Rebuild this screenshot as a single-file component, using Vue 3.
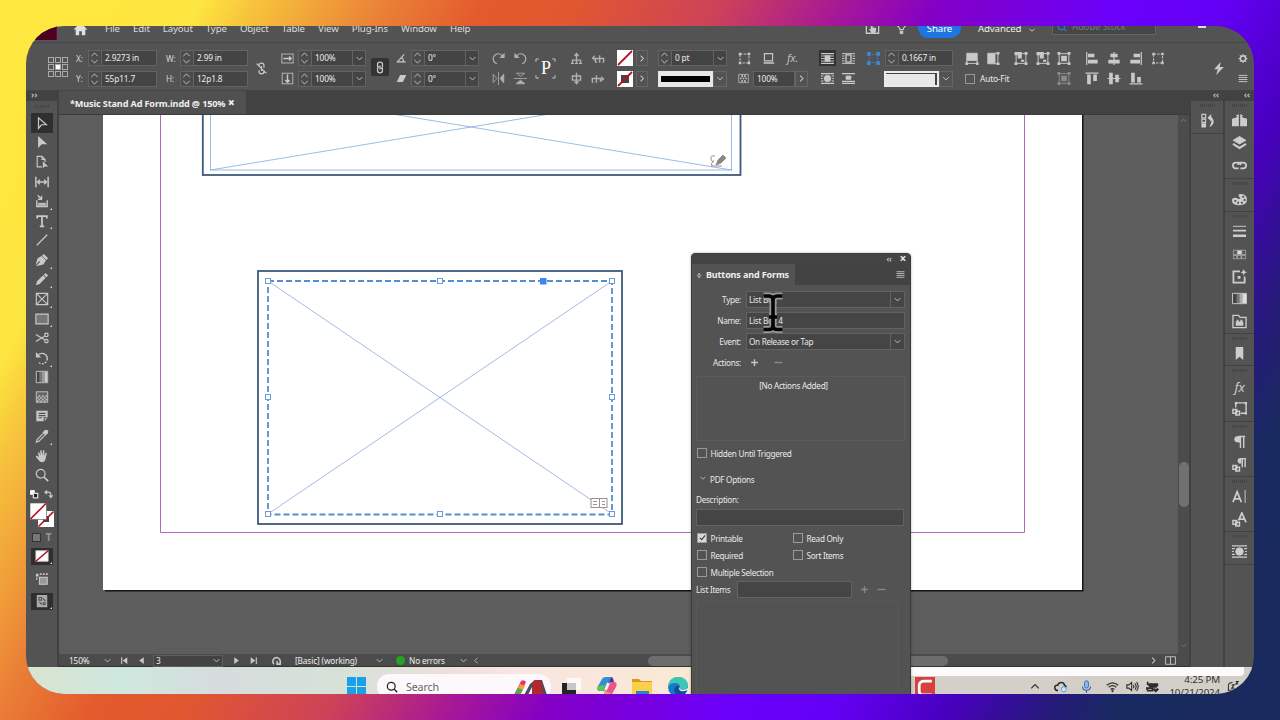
<script setup>
import { ref } from 'vue'

const menus = ['File', 'Edit', 'Layout', 'Type', 'Object', 'Table', 'View', 'Plug-Ins', 'Window', 'Help']

// every icon lives on a 16x16 grid
const icons = {
  home: '<path fill="currentColor" stroke="none" d="M8 1 0 8.500h2.500V15h4v-4.500h3V15h4V8.500H16z"/>',
  touch: '<path stroke-width="1.500" d="M4 3H1v11h14V3h-2"/><path fill="currentColor" stroke="none" d="M6 1h2v6l4 1v4l-2 2H7L4 9h2z"/>',
  bulb: '<path stroke-width="1.500" d="M2 2c0 4 4 5 4 8h4c0-3 4-4 4-8M6 13h4"/><path fill="currentColor" d="M6.500 12h3v3h-3z"/>',
  down: '<path stroke-width="1.600" d="m3 5.500 5 5 5-5"/>',
  right: '<path stroke-width="1.800" d="m5.500 3 5 5-5 5"/>',
  left: '<path stroke-width="1.400" d="m10 3-5 5 5 5"/>',
  up: '<path stroke-width="1.800" d="m2 11 6-6 6 6"/>',
  unlink: '<path stroke-width="1.500" d="M5 6V4q0-2.500 3-2.500T11 4v3M5 10v2q0 2.500 3 2.500t3-2.500v-1.500M8 5v6M2 2l12 12"/>',
  chain: '<path stroke-width="1.600" d="M5 7V4q0-2.500 3-2.500T11 4v3q0 2-2 2M11 9v3q0 2.500-3 2.500T5 12V9q0-2 2-2M8 5.500v5"/>',
  scaleX: '<path d="M1 2v12M15 2v12M1 2.500h14M1 13.500h14" /><path stroke-width="1.800" d="M3 8h9M10 5.500 12.500 8 10 10.500"/>',
  scaleY: '<path d="M1.500 1.500h13M1.500 14.500h13M1.500 1v14M14.500 1v14"/><path stroke-width="1.800" d="M8 3v9M5.500 10 8 12.500 10.500 10"/>',
  angle: '<path stroke-width="1.700" d="M12 2 2 13h12M8 6.500q3 2 3 6.500"/>',
  shear: '<path fill="currentColor" stroke="none" d="M6 3h9l-5 10H1z"/>',
  rotCw: '<path stroke-width="1.500" d="M6 14.500A6.300 6.300 0 1 1 13 5"/><path fill="currentColor" stroke="none" d="M15.500 1v6.500H9z"/>',
  rotCcw: '<path stroke-width="1.500" d="M10 14.500A6.300 6.300 0 1 0 3 5"/><path fill="currentColor" stroke="none" d="M.5 1v6.500H7z"/>',
  flipH: '<path d="M8 0v16M1.500 3v10L6 8z"/><path fill="currentColor" d="M14.500 2.500v11L10 8z"/>',
  flipV: '<path d="M0 8h16M3 1.500h10L8 5.500z"/><path fill="currentColor" d="M2.500 14.500h11L8 10z"/>',
  selUp: '<path stroke-width="1.700" d="M8 2v12M3 14v-4h10v4M5.500 5 8 2l2.500 3M1 14h4M11 14h4M6 14h4"/>',
  selPrev: '<path stroke-width="1.700" d="M5 12V8h10v4M10 4v8M4 12.500h3M9 12.500h2M13.500 12.500h2"/><path fill="currentColor" stroke="none" d="M4 4v7L0 7.500z"/>',
  selDown: '<path stroke-width="1.700" d="M8 1v12M3 8V5h10v3M3 8v2h10V8M5.500 11.500 8 14.500l2.500-3"/>',
  selNext: '<path stroke-width="1.700" d="M1 12V8h10v4M6 4v8M.5 12.500h2M5 12.500h2"/><path fill="currentColor" stroke="none" d="M12 5v7l4-3.500z"/>',
  frame: '<path stroke-width="1.300" stroke-dasharray="2 1.500" d="M3 3h10v10H3z"/><path fill="currentColor" stroke="none" d="M0 0h4.500v4.500H0zM11.500 0H16v4.500h-4.500zM0 11.500h4.500V16H0zM11.500 11.500H16V16h-4.500z"/>',
  dashBox: '<path stroke-width="1.200" stroke-dasharray="3 1.500" d="M2.500 2.500h11v11h-11z"/><path fill="currentColor" stroke="none" d="M1 1h3v3H1zM12 1h3v3h-3zM1 12h3v3H1zM12 12h3v3h-3z"/>',
  shadow: '<path stroke-width="1.400" d="M3 2h10v9H3z"/><path stroke-width="2" d="M2 13.500h13"/>',
  checker: '<path d="M1 2h14v12H1z"/><path fill="currentColor" stroke="none" d="M5 3h2v3H5zM9 3h2v3H9zM3 7h2v2H3zM7 7h2v2H7zM11 7h2v2h-2zM5 10h2v3H5zM9 10h2v3H9z"/>',
  wrapNone: '<path stroke-width="1.300" d="M0 2h16M0 5h16M0 8h16M0 11h16M0 14h16"/><path fill="currentColor" stroke="none" d="M4.500 4h7v8h-7z"/>',
  wrapBox: '<path stroke-width="1.200" d="M0 2h16M0 5h3M13 5h3M0 8h3M13 8h3M0 11h3M13 11h3M0 14h16"/><path stroke-width="1.700" d="M5 3.500h6v9H5z"/>',
  wrapShape: '<path stroke-width="1.300" d="M0 2h16M0 5h3M13 5h3M0 8h2M14 8h2M0 11h3M13 11h3M0 14h16"/><circle cx="8" cy="8" r="4" fill="currentColor"/>',
  wrapJump: '<path stroke-width="1.500" d="M0 2h16M0 14h16M0 11.500h16"/><path fill="currentColor" d="M5 5h6v4H5z"/>',
  fitA: '<path fill="currentColor" d="M1.500 1.500h13v9h-13z"/><path stroke-width="1.200" d="M1.500 10v4h13v-4"/><path fill="currentColor" stroke="none" d="M0 12.500h3V16H0zM13 12.500h3V16h-3z"/>',
  fitB: '<path fill="currentColor" d="M1.500 1.500h9v13h-9z"/><path stroke-width="1.200" d="M10 1.500h4v13h-4"/><path fill="currentColor" stroke="none" d="M12.500 0H16v3h-3.500zM12.500 13H16v3h-3.500z"/>',
  fitC: '<path stroke-width="1.200" d="M2 2h12v12H2z"/><path fill="currentColor" stroke="none" d="M0 0h9v8H4V4H0zM12.500 0H16v3.500h-3.500zM0 12.500h3.500V16H0zM12.500 12.500H16V16h-3.500zM8 9.500h4v2.500H8z"/>',
  fitD: '<path stroke-width="1.200" d="M2 2h12v12H2z"/><path fill="currentColor" stroke="none" d="M4.500 4.500h7v7h-7zM0 0h3.500v3.500H0zM12.500 0H16v3.500h-3.500zM0 12.500h3.500V16H0zM12.500 12.500H16V16h-3.500z"/>',
  alL: '<path stroke-width="1.500" d="M1.500 0v16"/><path fill="currentColor" stroke="none" d="M3 2h8v4.500H3zM3 9.500h12V14H3z"/>',
  alC: '<path stroke-width="1.500" d="M8 0v16"/><path fill="currentColor" stroke="none" d="M3.500 2h9v4.500h-9zM1 9.500h14V14H1z"/>',
  alR: '<path stroke-width="1.500" d="M14.500 0v16"/><path fill="currentColor" stroke="none" d="M5 2h8v4.500H5zM1 9.500h12V14H1z"/>',
  alT: '<path stroke-width="1.500" d="M0 1.500h16"/><path fill="currentColor" stroke="none" d="M2 3h4.500v12H2zM9.500 3H14v8H9.500z"/>',
  alM: '<path stroke-width="1.500" d="M0 8h16"/><path fill="currentColor" stroke="none" d="M2 1h4.500v14H2zM9.500 3.500H14v9H9.500z"/>',
  alB: '<path stroke-width="1.500" d="M0 14.500h16"/><path fill="currentColor" stroke="none" d="M2 1h4.500v12H2zM9.500 6H14v7H9.500z"/>',
  bolt: '<path fill="currentColor" stroke="none" d="M10 0 2 9h4.500L4.500 16 14 6H9z"/>',
  gear: '<circle cx="8" cy="8" r="4.300" stroke-width="2.600"/><path stroke-width="2" d="M8 1v2M8 13v2M1 8h2M13 8h2M3 3l1.500 1.500M11.500 11.500 13 13M13 3l-1.500 1.500M4.500 11.500 3 13"/>',
  menu: '<path stroke-width="1.500" d="M1 3h14M1 6.300h14M1 9.600h14M1 13h14"/>',
  select: '<path stroke-width="1.400" d="M4 2v12l3.500-4H13z"/>',
  direct: '<path fill="currentColor" stroke="none" d="M3.500 1v14l4-4.500H14z"/>',
  page: '<path stroke-width="1.300" d="M8 13.500H2.500V1.500H8L11.500 5v3M8 1.500V5h3.500"/><path fill="currentColor" stroke="none" d="M9 7v8l2-2h4z"/>',
  gap: '<path stroke-width="1.700" d="M1 2v12M15 2v12M3 8h10M5.500 5.500 3 8l2.500 2.500M10.500 5.500 13 8l-2.500 2.500"/>',
  collect: '<path stroke-width="1.500" d="M2 7v7.500h12V7M4.500 11.500h7M3 1.500l4 4M7.500 2v4h-4"/><path fill="currentColor" stroke="none" d="M3 10h10v4H3z" opacity=".7"/>',
  type: '<path stroke-width="2" d="M2.500 5V2.500h11V5M8 2.500v11M5.500 14h5"/>',
  line: '<path stroke-width="1.400" d="M2 14 14 2"/>',
  pen: '<path fill="currentColor" stroke="none" d="m10 1 5 5-2 2-5-5zM7.500 3.500l5 5-3 4.500L1 15l5-5-1-1-4.500 5L3 6z"/>',
  pencil: '<path fill="currentColor" stroke="none" d="m12 1 3 3-2 2-3-3zM9.300 3.700l3 3-7 7L1 15l1.300-4.300z"/>',
  rectFrame: '<path stroke-width="1.300" d="M1.500 1.500h13v13h-13zM1.500 1.500l13 13M14.500 1.500l-13 13"/>',
  rect: '<path stroke-width="1.300" fill="#777" d="M1 2.500h14v11H1z"/>',
  scissors: '<path stroke-width="1.500" d="M1 4l10 6M1 12l10-6"/><circle cx="13" cy="4.500" r="2" stroke-width="1.400"/><circle cx="13" cy="11.500" r="2" stroke-width="1.400"/>',
  rotate: '<path stroke-width="1.600" d="M3 5.500A6 6 0 0 1 14 9" /><path stroke-width="1.600" stroke-dasharray="2 1.500" d="M14 9A6 6 0 0 1 4 13"/><path fill="currentColor" stroke="none" d="M1 1v6.500h6z"/>',
  gradient: '<path fill="#444" stroke="none" d="M2 2h3v12H2z"/><path fill="#777" stroke="none" d="M5 2h3v12H5z"/><path fill="#999" stroke="none" d="M8 2h3v12H8z"/><path fill="#ccc" stroke="none" d="M11 2h3v12h-3z"/><path d="M1.500 1.500h13v13h-13z"/>',
  feather: '<path d="M1.500 2h13v12h-13z" fill="#666"/><path fill="#bbb" stroke="none" d="M2 8h2v2H2zM6 8h2v2H6zM10 8h2v2h-2zM4 10h2v2H4zM8 10h2v2H8zM12 10h2v2h-2zM2 12h2v2H2zM6 12h2v2H6zM10 12h2v2h-2zM4 6h2v2H4zM8 6h2v2H8zM12 6h2v2h-2z"/>',
  note: '<path fill="currentColor" stroke="none" d="M1.500 2h13v8l-4 4h-9z"/><path stroke="#535353" stroke-width="1.300" d="M4 5h8M4 7.500h8M4 10h4M10.500 14v-4h4"/>',
  dropper: '<path stroke-width="1.300" d="m9.500 5-7 7-1 3 3-1 7-7"/><path fill="currentColor" stroke="none" d="M11 1.500q2-1.500 3.500 0t0 3.500L12 7.500 8.500 4z"/>',
  hand: '<path fill="currentColor" stroke="none" d="M4.500 9 3.300 4l1.500-.4L6.200 7.500 6 1.500h1.600l.6 6 1-6h1.500l-.3 6.300L12.300 4l1.300.5-1.400 6Q11.500 15 8 15q-2.500 0-4-2.500L.8 8.500 2 7.500z"/>',
  zoom: '<circle cx="6.500" cy="6.500" r="5" stroke-width="1.400"/><path stroke-width="2" d="m10 10 5 5"/>',
  swap: '<path stroke-width="1.800" d="M4 5h3q4 0 4 5"/><path fill="currentColor" stroke="none" d="M5 1v8L0 5zM7 10h8l-4 5z"/>',
  pages: '<path fill="currentColor" stroke="none" d="M7.300 2v12H0V6l4-1zM8.700 2v12H16V6l-4-1zM4 3l3-2v3zM12 3 9 1v3z"/>',
  layers: '<path fill="currentColor" stroke="none" d="m8 1 7.500 4.500L8 10 .5 5.500z"/><path stroke-width="2.200" d="m1 9.500 7 4.300 7-4.300"/>',
  links: '<path stroke-width="1.900" d="M7 11H4Q1 11 1 8t3-3h3q2 0 2.500 2.500M9 11h3q3 0 3-3t-3-3H9Q7 5 6.500 7.500"/>',
  palette: '<path fill="currentColor" stroke="none" fill-rule="evenodd" d="M9 2q7 0 7 6t-8 6-8-5q0-3 3-3 2 0 3 1t3-.5L7.500 5Q6 2 9 2zM11 4h2v2h-2zM12.500 7.500h2v2h-2zM9.500 10.500h2v2h-2zM5.500 10.500h2v2h-2zM2.500 8.500h2v2h-2z"/>',
  stroke: '<path d="M1 2.500h14"/><path stroke-width="1.800" d="M1 7h14"/><path stroke-width="2.800" d="M1 12.500h14"/>',
  swatches: '<path fill="#999" stroke="none" d="M1 3h14v10H1z"/><path fill="#555" stroke="none" d="M2 4h3v3.500H2zM11 4h3v3.500h-3zM2 9.500h2.500V12H2zM6.500 9.500H9V12H6.500zM11 9.500h3V12h-3z"/><path fill="#ddd" stroke="none" d="M6 4h4v3.500H6z"/>',
  newBox: '<path stroke-width="1.900" d="M8.500 2.500h-7v12h12V8"/><path fill="currentColor" stroke="none" d="m12.500 0 1 2.500L16 3.500l-2.500 1-1 2.500-1-2.500L9 3.500l2.500-1zM6 7.500h3v3H6z"/>',
  gradPanel: '<path fill="#444" stroke="none" d="M1 3h4v10H1z"/><path fill="#777" stroke="none" d="M5 3h3v10H5z"/><path fill="#aaa" stroke="none" d="M8 3h3v10H8z"/><path fill="#ddd" stroke="none" d="M11 3h4v10h-4z"/><path d="M.5 2.500h15v11H.5z"/>',
  library: '<path stroke-width="1.400" d="M1 14.500V1.500h6l1.500 2H15v11z"/><path fill="currentColor" stroke="none" d="M4 8h1V6h2v2h2V6h2v2h1v4.500H4z"/>',
  bookmark: '<path fill="currentColor" stroke="none" d="M4 1h8v14l-4-3.500L4 15z"/>',
  objStyle: '<path stroke-width="1.500" d="M4 7V2h11v11H9"/><path fill="currentColor" stroke="none" d="M3 1h2.500v2.500H3zM13.500 1H16v2.500h-2.500zM13.500 12H16v2.500h-2.500z"/><path stroke-width="1.500" d="M1 9h4v4H1zM4 11h4v4H4z"/>',
  para: '<path fill="currentColor" stroke="none" d="M9 2v7H7Q2.500 9 2.500 5.500T7 2z"/><path stroke-width="1.500" d="M9 2v13M12.500 2v13M7 2.700h7"/>',
  paraStyle: '<path fill="currentColor" stroke="none" d="M10 1v6H9Q6 7 6 4t3-3z"/><path stroke-width="1.500" d="M11 1v10M14 1v10M9 1.700h6M1 9h4v4H1zM4 11h4v4H4z"/>',
  char: '<path stroke-width="1.800" d="m1 14 4.500-11L10 14M3 10.500h5"/><path d="M14 1v14"/>',
  charStyle: '<path stroke-width="1.800" d="m7 9 3.500-8L15 11M8 7.500h5"/><path stroke-width="1.500" d="M1 9h4v4H1zM4 11h4v4H4z"/>',
  convert: '<path fill="currentColor" stroke="none" d="M1 2h3v3H1zM5.500 1.500h2v2h-2zM9 1.500h2v2H9zM12.500 1.500h2v2h-2z"/><path stroke-width="1.200" d="M5 6h9v8H5zM2 6v3" fill="#999"/>',
  preview: '<path fill="#aaa" stroke="none" d="M2 1h12v14H2z"/><path stroke="#555" stroke-width="1.300" d="M4.500 4h3v3h-3zM9 5l3 3M5 9l3 3M9.500 10h2v2h-2z"/>',
  history: '<path stroke-width="1.200" d="M2 1.500h4v3.500H2zM2 6.500h4V10H2z"/><path fill="currentColor" stroke="none" d="M1.500 11H6.500v4.500h-5zM8 5l4-4v3q3 3 2.500 6T10 15q3-6 2-8v2z"/>',
  first: '<path stroke-width="2" d="M3 2v12"/><path fill="currentColor" stroke="none" d="M13 2v12L5 8z"/>',
  prev: '<path fill="currentColor" stroke="none" d="M12 2v12L4 8z"/>',
  next: '<path fill="currentColor" stroke="none" d="M4 2v12l8-6z"/>',
  last: '<path stroke-width="2" d="M13 2v12"/><path fill="currentColor" stroke="none" d="M3 2v12l8-6z"/>',
  preflight: '<path stroke-width="2.500" d="M4 13A6 6 0 1 1 14 8v5H9V8"/>',
  spread: '<path stroke-width="1.300" d="M.8 2.500h14.400v11H.8zM8 2.500v11"/>',
  plus: '<path stroke-width="2.400" d="M8 2v12M2 8h12"/>',
  minus: '<path stroke-width="2.400" d="M1 8h14"/>',
  search: '<circle cx="7" cy="7" r="5.200" stroke-width="1.700"/><path stroke-width="1.800" d="m11 11 4 4"/>',
  cloud: '<path stroke-width="1.900" d="M5 13Q1 13 1 9.500T4.500 6.500Q5.500 3 9 3t4 3.500Q15 7 15 9"/><circle cx="12" cy="11.500" r="3" stroke="#3b9be0" fill="#cfe9fb"/>',
  mic: '<rect x="5.500" y="1" width="5" height="9" rx="2.500" fill="#8fb8e8"/><path stroke-width="1.300" d="M3 8q0 4.500 5 4.500T13 8M8 12.500V16"/>',
  wifi: '<path stroke-width="1.500" d="M1 6.500q7-6 14 0M3.300 9q4.700-4 9.400 0M5.600 11.500q2.400-2 4.800 0"/><circle cx="8" cy="13.500" r="1" fill="currentColor"/>',
  speaker: '<path stroke-width="1.300" d="M1 6v4h2.500L7 13V3L3.500 6zM9 6q1.500 2 0 4M11 4q3 4 0 8M13 2.500q4 5.500 0 11"/>',
  battery: '<path stroke-width="2" d="M3 7q1-3 4-2h7v3M2 2v4M1 10h7v3H2z"/><path fill="currentColor" d="M4 6h9v3H4zM12 15l-3.500-3.500q1-2 3.500 0 2.500-2 3.500 0z"/>',
  bell: '<path stroke-width="1.300" d="M3 12V7q0-4 5-4M2 12.500h11M7 6h3l-3 4h3M12 2h3l-3 3h3"/>'
}

// top control strip: gap is the space before a column, rows run top to bottom
const controls = [
  { gap: 7, rows: [[{ label: 'X:', w: 12 }, { field: '2.9273 in', w: 69, step: true }], [{ label: 'Y:', w: 12 }, { field: '55p11.7', w: 69, step: true }]] },
  { gap: 9, rows: [[{ label: 'W:', w: 14 }, { field: '2.99 in', w: 68, step: true }], [{ label: 'H:', w: 14 }, { field: '12p1.8', w: 68, step: true }]] },
  { gap: 7, rows: [[{ icon: 'unlink', w: 13 }]] },
  { gap: 13, rows: [[{ icon: 'scaleX', w: 13 }, { field: '100%', w: 68, step: true, drop: true, pre: 4 }], [{ icon: 'scaleY', w: 13 }, { field: '100%', w: 68, step: true, drop: true, pre: 4 }]] },
  { gap: 5, on: true, rows: [[{ icon: 'chain', w: 18 }]] },
  { gap: 7, rows: [[{ icon: 'angle', w: 11 }, { field: '0°', w: 68, step: true, drop: true, pre: 4 }], [{ icon: 'shear', w: 11 }, { field: '0°', w: 68, step: true, drop: true, pre: 4 }]] },
  { gap: 12, dim: true, rows: [[{ icon: 'rotCw', w: 15 }, { icon: 'rotCcw', w: 15, pre: 7 }], [{ icon: 'flipH', w: 15 }, { icon: 'flipV', w: 15, pre: 7 }]] },
  { gap: 7, rows: [[{ mark: true, w: 22 }]] },
  { gap: 13, dim: true, rows: [[{ icon: 'selUp', w: 13 }, { icon: 'selPrev', w: 16, pre: 7 }], [{ icon: 'selDown', w: 13 }, { icon: 'selNext', w: 16, pre: 7 }]] },
  { gap: 11, rows: [[{ none: 'fill', w: 16 }, { icon: 'right', w: 12, box: true, pre: 3 }], [{ none: 'stroke', w: 16 }, { icon: 'right', w: 12, box: true, pre: 3 }]] },
  { gap: 10, rows: [[{ field: '0 pt', w: 69, step: true, drop: true }], [{ weight: true, w: 55 }, { icon: 'down', w: 14, box: true }]] },
  { gap: 11, rows: [[{ icon: 'dashBox', w: 13 }, { icon: 'shadow', w: 13, pre: 11 }, { fx: true, w: 14, pre: 12 }], [{ icon: 'checker', w: 11 }, { field: '100%', w: 42, pre: 4 }, { icon: 'right', w: 13, box: true }]] },
  { gap: 11, rows: [[{ icon: 'wrapNone', w: 17, dark: true }, { icon: 'wrapBox', w: 13, pre: 6 }], [{ icon: 'wrapShape', w: 17 }, { icon: 'wrapJump', w: 13, pre: 6 }]] },
  { gap: 12, rows: [[{ icon: 'frame', w: 13, blue: true }, { field: '0.1667 in', w: 68, step: true, pre: 5 }], [{ corner: true, w: 55, pre: 17 }, { icon: 'down', w: 14, box: true }]] },
  { gap: 12, rows: [[{ icon: 'fitA', w: 14 }, { icon: 'fitB', w: 14, pre: 7 }, { icon: 'fitC', w: 14, pre: 14 }, { icon: 'fitC', w: 14, pre: 8 }, { icon: 'fitD', w: 14, pre: 7 }], [{ check: 'Auto-Fit', w: 92 }, { icon: 'fitD', w: 14, dimmed: true }]] },
  { gap: 14, rows: [[{ icon: 'alL', w: 14 }, { icon: 'alC', w: 14, pre: 8 }, { icon: 'alR', w: 14, pre: 8 }, { icon: 'dashBox', w: 14, pre: 8 }], [{ icon: 'alT', w: 14 }, { icon: 'alM', w: 14, pre: 8 }, { icon: 'alB', w: 14, pre: 8 }]] },
  { gap: 47, rows: [[{ icon: 'bolt', w: 14 }]] },
  { gap: 12, rows: [[{ icon: 'gear', w: 10 }], [{ icon: 'menu', w: 10 }]] }
]

const tools = [
  { n: 'select' }, { n: 'direct' }, { n: 'page' }, { n: 'gap' }, { n: 'collect', more: true }, { n: 'type', more: true },
  { n: 'line' }, { n: 'pen', more: true }, { n: 'pencil', more: true }, { n: 'rectFrame', more: true }, { n: 'rect', more: true },
  { n: 'scissors' }, { n: 'rotate', more: true }, { n: 'gradient' }, { n: 'feather' }, { n: 'note' },
  { n: 'dropper', more: true }, { n: 'hand' }, { n: 'zoom' }
]
const activeTool = ref('select')

const docks = [
  ['pages', 'layers', 'links'],
  ['palette'],
  ['stroke', 'swatches', 'newBox', 'gradPanel', 'library'],
  ['bookmark'],
  ['fx', 'objStyle'],
  ['para', 'paraStyle'],
  ['char', 'charStyle'],
  ['wrapShape']
]

const handles = [
  [268, 281], [440, 281], [612, 281], [268, 397], [612, 397], [268, 514], [440, 514], [612, 514]
]

const form = ref({
  type: 'List Box',
  name: 'List Box 4',
  event: 'On Release or Tap',
  description: '',
  hidden: false,
  printable: true,
  readOnly: false,
  required: false,
  sortItems: false,
  multiple: false,
  item: ''
})
</script>

<template>
  <div class="backdrop">
    <div class="screen">
      <header class="menubar">
        <span class="logo"></span>
        <svg class="home" viewBox="0 0 16 16" v-html="icons.home"></svg>
        <nav class="menus">
          <span v-for="m in menus" :key="m">{{ m }}</span>
        </nav>
        <div class="menu-right">
          <svg class="touch" viewBox="0 0 16 16" v-html="icons.touch"></svg>
          <svg class="bulb" viewBox="0 0 16 16" v-html="icons.bulb"></svg>
          <span class="share">Share</span>
          <span class="workspace">Advanced</span>
          <svg class="ws-arrow" viewBox="0 0 16 16" v-html="icons.down"></svg>
          <span class="stock"><svg viewBox="0 0 16 16" v-html="icons.search"></svg>Adobe Stock</span>
          <span class="minimize"></span>
        </div>
      </header>

      <section class="controls">
        <div class="refpoint"><i v-for="n in 9" :key="n" :class="{ mid: n === 5 }"></i></div>
        <div
          v-for="(g, gi) in controls"
          :key="gi"
          class="group"
          :class="{ single: g.rows.length === 1, on: g.on, dim: g.dim }"
          :style="{ marginLeft: g.gap + 'px' }"
        >
          <div v-for="(row, ri) in g.rows" :key="ri" class="row">
            <div
              v-for="(c, ci) in row"
              :key="ci"
              class="cell"
              :class="{ box: c.box, dark: c.dark, blue: c.blue, faded: c.dimmed }"
              :style="{ width: c.w + 'px', marginLeft: (c.pre || 0) + 'px' }"
            >
              <svg v-if="c.icon" class="glyph" viewBox="0 0 16 16" v-html="icons[c.icon]"></svg>
              <span v-else-if="c.label" class="lbl">{{ c.label }}</span>
              <div v-else-if="c.field" class="field">
                <span v-if="c.step" class="step">
                  <svg viewBox="0 0 12 14"><path d="m2.500 5 3.500-3.500L9.500 5M2.500 9 6 12.500 9.500 9" /></svg>
                </span>
                <span class="val">{{ c.field }}</span>
                <span v-if="c.drop" class="drop"><svg viewBox="0 0 16 16" v-html="icons.down"></svg></span>
              </div>
              <svg v-else-if="c.none" class="none" viewBox="0 0 16 16">
                <rect width="16" height="16" fill="#fff" />
                <rect v-if="c.none === 'stroke'" x="4" y="4" width="8" height="8" fill="#444" />
                <path d="M1 15 15 1" stroke="#b5122a" stroke-width="1.800" />
              </svg>
              <span v-else-if="c.mark" class="mark"><svg viewBox="0 0 22 22"><path d="M1 4V1h3M18 1h3v3M1 18v3h3M18 21h3v-3" /></svg>P</span>
              <span v-else-if="c.fx" class="fx">fx.</span>
              <span v-else-if="c.weight" class="weight"></span>
              <span v-else-if="c.corner" class="corner"></span>
              <span v-else-if="c.check" class="autofit"><i></i>{{ c.check }}</span>
            </div>
          </div>
        </div>
      </section>

      <main class="work">
        <aside class="toolbar">
          <div class="dock-head">››</div>
          <div class="grip"></div>
          <button
            v-for="t in tools"
            :key="t.n"
            class="tool"
            :class="{ active: activeTool === t.n, more: t.more }"
            @click="activeTool = t.n"
          >
            <svg viewBox="0 0 16 16" v-html="icons[t.n]"></svg>
          </button>
          <div class="mini">
            <svg viewBox="0 0 16 16"><path d="M1 1h9v9H1z" fill="#fff" stroke="#222" /><path d="M7 7h7v7H7z" fill="#222" stroke="#ddd" stroke-width="2" /></svg>
            <svg viewBox="0 0 16 16" v-html="icons.swap"></svg>
          </div>
          <svg class="fillstroke" viewBox="0 0 24 24">
            <path d="M8 8h16v16H8z" fill="#fff" /><path d="M13 13h6v6h-6z" fill="#444" />
            <path d="M8.500 23.500 23.500 8.500" stroke="#b5122a" stroke-width="1.600" />
            <path d="M0 0h16.500v16.500H0z" fill="#fff" stroke="#555" stroke-width=".6" />
            <path d="M.5 16 16 .5" stroke="#b5122a" stroke-width="1.600" />
          </svg>
          <div class="mini second"><i></i><b>T</b></div>
          <div class="tool slot active more">
            <svg viewBox="0 0 16 16"><path d="M1 2h14v12H1z" fill="#fff" /><path d="M1 14 15 2" stroke="#b5122a" stroke-width="1.800" /></svg>
          </div>
          <div class="tool slot"><svg viewBox="0 0 16 16" v-html="icons.convert"></svg></div>
          <div class="tool slot active more"><svg viewBox="0 0 16 16" v-html="icons.preview"></svg></div>
        </aside>

        <div class="document">
          <div class="tabs"><span class="tab">*Music Stand Ad Form.indd @ 150% <b>×</b></span></div>
          <div class="canvas">
            <svg class="page" viewBox="59 115 1119 539">
              <rect x="105" y="100" width="978.500" height="491.500" fill="#151515" />
              <rect x="103" y="100" width="979" height="490" fill="#fff" />
              <path d="M160.500 100v432.500h864V100" class="margin" />
              <rect x="202.800" y="90" width="537.700" height="85" class="outer" />
              <rect x="210.500" y="84" width="521" height="86" class="thin" />
              <path d="m210.500 84 521 86M731.500 84l-521 86" class="thin" />
              <g class="sign">
                <path d="M711 166h11M715 156q-5-1-4 3t3 2q-4 2-2 5" />
                <path d="m716 165 2-5 5-5 3 3-5 5z" fill="#8c8583" />
              </g>
              <rect x="258" y="271" width="364" height="253" class="outer" />
              <path d="m268 281 344 233M612 281 268 514" class="thin" />
              <rect x="268" y="281" width="344" height="233.500" class="dashed" />
              <g class="listbox">
                <rect x="591" y="498.500" width="16" height="9" />
                <path d="M599.500 498v10M593 501.500h4M593 504.500h4M602 501.500h3M602 504.500h3" />
              </g>
              <rect v-for="([x, y], i) in handles" :key="i" :x="x - 2.500" :y="y - 2.500" width="5" height="5" class="handle" />
              <rect x="540" y="278" width="6.500" height="6.500" fill="#3d85f0" />
            </svg>
            <div class="vscroll">
              <svg viewBox="0 0 16 16" v-html="icons.up"></svg>
              <i></i>
              <svg viewBox="0 0 16 16" v-html="icons.down"></svg>
            </div>
          </div>
          <footer class="status">
            <span class="zoomlevel">150%</span>
            <svg class="s-down" viewBox="0 0 16 16" v-html="icons.down"></svg>
            <svg class="s-first" viewBox="0 0 16 16" v-html="icons.first"></svg>
            <svg class="s-prev" viewBox="0 0 16 16" v-html="icons.prev"></svg>
            <span class="pagebox">3<svg viewBox="0 0 16 16" v-html="icons.down"></svg></span>
            <svg class="s-next" viewBox="0 0 16 16" v-html="icons.next"></svg>
            <svg class="s-last" viewBox="0 0 16 16" v-html="icons.last"></svg>
            <svg class="s-flight" viewBox="0 0 16 16" v-html="icons.preflight"></svg>
            <span class="profile">[Basic] (working)</span>
            <svg class="s-down2" viewBox="0 0 16 16" v-html="icons.down"></svg>
            <i class="ok"></i>
            <span class="errors">No errors</span>
            <svg class="s-down3" viewBox="0 0 16 16" v-html="icons.down"></svg>
            <div class="hscroll">
              <svg viewBox="0 0 16 16" v-html="icons.left"></svg>
              <i></i>
              <svg viewBox="0 0 16 16" v-html="icons.right"></svg>
            </div>
            <svg class="s-spread" viewBox="0 0 16 16" v-html="icons.spread"></svg>
          </footer>
        </div>

        <aside class="dock wide">
          <div class="dock-head">‹‹</div>
          <div class="dock-group"><div class="grip"></div><div class="dock-item"><svg viewBox="0 0 16 16" v-html="icons.history"></svg></div></div>
        </aside>
        <aside class="dock">
          <div class="dock-head">‹‹</div>
          <div v-for="(d, i) in docks" :key="i" class="dock-group">
            <div class="grip"></div>
            <div v-for="n in d" :key="n" class="dock-item">
              <span v-if="n === 'fx'" class="fx big">fx</span>
              <svg v-else viewBox="0 0 16 16" v-html="icons[n]"></svg>
            </div>
          </div>
        </aside>
      </main>

      <div class="taskbar">
        <svg class="win" viewBox="0 0 19 19"><path d="M0 0h9v9H0zM10 0h9v9h-9zM0 10h9v9H0zM10 10h9v9h-9z" /></svg>
        <div class="searchbox">
          <svg viewBox="0 0 16 16" v-html="icons.search"></svg><span>Search</span>
          <svg class="art" viewBox="0 0 34 18">
            <path d="M0 18 8 2q3-2 5 1L6 18z" fill="#e0357c" /><path d="m2 14 3-5 5 2-3 5z" fill="#4caf50" /><path d="m5 9 2-4 5 2-2 4z" fill="#f2a33c" />
            <path d="m10 18 7-13 5-4h7l5 15h-4l-2-5v7h-9V8l-5 10z" fill="#4b4c5d" /><path d="m20 2 3-1h4l2 2 1 14H19z" fill="#b3282d" />
          </svg>
        </div>
        <svg class="taskview" viewBox="0 0 20 18"><path d="M0 5h14v13H0z" fill="#242424" /><path d="M5 0h14v12H5z" fill="#fff" opacity=".75" /></svg>
        <svg class="copilot" viewBox="0 0 20 20">
          <path d="M5 2Q6 0 9 0h5l-4 11q-1 3-4 3H3q-4 0-2-5z" fill="#2f8fd8" /><path d="M1 9q-2 5 2 5h3l2-6z" fill="#62c255" />
          <path d="M15 17q-1 3-4 3H6L10 9q1-4 4-4h3q4 0 2 5z" fill="#e4568d" /><path d="M14 0q2 0 2.500 3l.5 2h-3q-3 0-4 4z" fill="#443bb0" /><path d="m8 14-2 6h5q2 0 3-4z" fill="#f39a55" />
          <path d="m8.500 13 3-7" stroke="#fbeadb" stroke-width="3" />
        </svg>
        <svg class="folder" viewBox="0 0 20 18"><path d="M0 1h7l2 2h11v15H0z" fill="#d79a21" /><path d="M0 4h20v14H0z" fill="#fbcf4c" /><path d="M4 13h13v5H4z" fill="#2683d6" /></svg>
        <svg class="edge" viewBox="0 0 20 20"><circle cx="10" cy="10" r="10" fill="#1a78c8" /><path d="M0 10Q1 0 10 0t10 8q0 5-5 5-4 0-3-3 0-4-5-4-5 0-7 4z" fill="#3cc7b4" /><path d="M11 9q-1 6 8 4-2 6-8 6-8-4-3-10z" fill="#0d4f9c" /><path d="M11 10q-1 5 6 4l3-1v-2q-2 2-5 2-3 0-4-3z" fill="#eef" /></svg>
        <svg class="camtasia" viewBox="0 0 19 19"><path d="M0 0h19v19H0z" fill="#d8403f" /><path d="M16 4H9Q4 4 4 8v5q0 4 4 4h8" fill="none" stroke="#fff" stroke-width="2.600" /></svg>
        <div class="tray">
          <svg viewBox="0 0 16 16" v-html="icons.up"></svg>
          <svg viewBox="0 0 16 16" v-html="icons.cloud"></svg>
          <svg class="mic" viewBox="0 0 16 16" v-html="icons.mic"></svg>
          <svg viewBox="0 0 16 16" v-html="icons.wifi"></svg>
          <svg viewBox="0 0 16 16" v-html="icons.speaker"></svg>
          <svg viewBox="0 0 16 16" v-html="icons.battery"></svg>
        </div>
        <div class="clock"><span>4:25 PM</span><span>10/21/2024</span></div>
        <svg class="bell" viewBox="0 0 16 16" v-html="icons.bell"></svg>
      </div>

      <section class="panel">
        <div class="panel-bar"><span>‹‹</span><b>×</b></div>
        <div class="panel-tabs">
          <span class="panel-tab"><i>◊</i>Buttons and Forms</span>
          <svg viewBox="0 0 16 16" v-html="icons.menu"></svg>
        </div>
        <div class="panel-body">
          <div class="prop"><label>Type:</label><div class="input">{{ form.type }}<span><svg viewBox="0 0 16 16" v-html="icons.down"></svg></span></div></div>
          <div class="prop"><label>Name:</label><div class="input">{{ form.name }}</div></div>
          <div class="prop"><label>Event:</label><div class="input">{{ form.event }}<span><svg viewBox="0 0 16 16" v-html="icons.down"></svg></span></div></div>
          <div class="prop actions">
            <label>Actions:</label>
            <svg viewBox="0 0 16 16" v-html="icons.plus"></svg>
            <svg class="off" viewBox="0 0 16 16" v-html="icons.minus"></svg>
          </div>
          <div class="actionlist">[No Actions Added]</div>
          <label class="check" @click="form.hidden = !form.hidden"><i :class="{ ticked: form.hidden }"></i>Hidden Until Triggered</label>
          <div class="section"><svg viewBox="0 0 16 16" v-html="icons.down"></svg>PDF Options</div>
          <div class="desc">Description:</div>
          <div class="input full">{{ form.description }}</div>
          <div class="checks">
            <label class="check" @click="form.printable = !form.printable"><i :class="{ ticked: form.printable }"></i>Printable</label>
            <label class="check" @click="form.readOnly = !form.readOnly"><i :class="{ ticked: form.readOnly }"></i>Read Only</label>
            <label class="check" @click="form.required = !form.required"><i :class="{ ticked: form.required }"></i>Required</label>
            <label class="check" @click="form.sortItems = !form.sortItems"><i :class="{ ticked: form.sortItems }"></i>Sort Items</label>
            <label class="check" @click="form.multiple = !form.multiple"><i :class="{ ticked: form.multiple }"></i>Multiple Selection</label>
          </div>
          <div class="items">
            <span>List Items</span>
            <div class="input">{{ form.item }}</div>
            <svg viewBox="0 0 16 16" v-html="icons.plus"></svg>
            <svg viewBox="0 0 16 16" v-html="icons.minus"></svg>
          </div>
          <div class="itemlist"></div>
        </div>
      </section>

      <svg class="cursor" viewBox="0 0 24 44">
        <path class="halo" d="M2.500 5H8q4 0 4 4 0-4 4-4h5.500M12 8v28M2.500 38.500H8q4 0 4-4 0 4 4 4h5.500M8 26h8" />
        <path class="beam" d="M2.500 5H8q4 0 4 4 0-4 4-4h5.500M12 8v28M2.500 38.500H8q4 0 4-4 0 4 4 4h5.500M8 26h8" />
      </svg>
    </div>
  </div>
</template>

<style>
body {
  margin: 0;
  overflow: hidden;
}
</style>

<style scoped>
* {
  box-sizing: border-box;
}

.backdrop {
  width: 1280px;
  height: 720px;
  padding: 26px;
  overflow: hidden;
  font-family: "Noto Sans", "Open Sans", sans-serif;
  background: linear-gradient(119deg, #ffe83f 0%, #fee640 12%, #f7c63c 15%, #ea8137 23%, #e35a2d 29%, #e1582f 34%, #cd4258 43%, #a81995 50%, #8300c5 56%, #6a00fb 67%, #6400f5 73%, #4700bd 80%, #251a79 86%, #192a60 90%, #19295d 100%);
}

.screen {
  position: relative;
  width: 1228px;
  height: 668px;
  border-radius: 38px;
  overflow: hidden;
  display: flex;
  flex-direction: column;
  background: #535353;
  color: #ececec;
  font-size: 8.3px;
  letter-spacing: -0.15px;
}

svg {
  display: block;
  flex: none;
  fill: none;
  stroke: currentColor;
  color: #c9c9c9;
  width: 12px;
  height: 12px;
}

.menubar {
  flex: none;
  height: 17px;
  border-bottom: 1px solid #474747;
  display: flex;
  align-items: flex-start;
  overflow: hidden;
}

.logo {
  width: 31px;
  height: 14px;
  background: #4b0220;
  border-right: 1px solid #6b0a35;
}

.home {
  width: 15px;
  height: 14px;
  margin: -4px 0 0 16px;
  color: #e0e0e0;
}

.menus {
  display: flex;
  gap: 13.1px;
  margin: -8px 0 0 17px;
  font-size: 9.700px;
  line-height: 21px;
  color: #dcdcdc;
}

.menu-right {
  display: flex;
  align-items: flex-start;
  margin-left: auto;
  width: 389px;
  margin-top: -8px;
  font-size: 9.700px;
  line-height: 21px;
}

.touch {
  width: 15px;
  height: 14px;
  margin-top: 3px;
}

.bulb {
  width: 13px;
  height: 14px;
  margin: 3px 0 0 15px;
}

.share {
  width: 43px;
  margin-left: 10px;
  height: 20px;
  border-radius: 10px;
  background: #1f74e2;
  color: #fff;
  text-align: center;
}

.workspace {
  width: 44px;
  margin-left: 17px;
}

.ws-arrow {
  width: 8px;
  height: 10px;
  margin: 7px 0 0 6px;
  color: #e6e6e6;
}

.stock {
  display: flex;
  align-items: center;
  gap: 5px;
  width: 104px;
  height: 17px;
  margin-left: 16px;
  padding-left: 4px;
  border: 1px solid #666;
  background: #464646;
  color: #777;
  font-size: 9.5px;
  line-height: 15px;
}

.stock svg {
  width: 10px;
  height: 10px;
  color: #2f7fd0;
}

.minimize {
  width: 8px;
  height: 2px;
  margin: 8px 0 0 42px;
  background: #ddd;
}

.controls {
  flex: none;
  height: 48px;
  border-bottom: 1px solid #454545;
  padding: 7px 0 0 22px;
  display: flex;
  align-items: flex-start;
}

.refpoint {
  width: 21px;
  height: 21px;
  margin-top: 7px;
  display: grid;
  grid-template-columns: repeat(3, 6px);
  grid-auto-rows: 6px;
  gap: 1px;
}

.refpoint i {
  border: 1px solid #aaa;
}

.refpoint .mid {
  background: #fff;
}

.group {
  flex: none;
  display: flex;
  flex-direction: column;
  gap: 4.500px;
}

.group.single {
  height: 36px;
  justify-content: center;
}

.group.single.on {
  height: 18px;
  margin-top: 8px;
  background: #333;
  border-radius: 2px;
}

.row {
  display: flex;
  height: 16px;
}

.cell {
  flex: none;
  height: 16px;
  display: flex;
  align-items: center;
  white-space: nowrap;
}

.glyph {
  width: 100%;
  height: 13px;
}

.dim svg {
  color: #b0b0b0;
}

.blue svg {
  color: #3f86d8;
}

.faded svg {
  color: #8a8a8a;
}

.cell.box {
  border: 1px solid #666;
}

.cell.box .glyph {
  height: 9px;
}

.cell.dark {
  background: #333;
}

.lbl {
  color: #d4d4d4;
}

.field {
  display: flex;
  width: 100%;
  height: 16px;
  border: 1px solid #636363;
  background: #444;
}

.step {
  width: 13px;
  border-right: 1px solid #636363;
  background: #4b4b4b;
}

.step svg {
  width: 11px;
  height: 14px;
}

.val {
  flex: 1;
  padding-left: 3px;
  line-height: 14px;
}

.drop {
  width: 13px;
  border-left: 1px solid #636363;
  display: grid;
  place-items: center;
}

.drop svg {
  width: 9px;
  height: 9px;
}

.none {
  width: 16px;
  height: 16px;
  stroke: none;
}

.mark {
  position: relative;
  width: 22px;
  text-align: center;
  font: 18px/22px "Liberation Serif", serif;
  color: #fff;
}

.mark svg {
  position: absolute;
  inset: 1px 0 0 0;
  width: 21px;
  height: 21px;
}

.fx {
  font: italic 11px/14px "Noto Sans", sans-serif;
  color: #bbb;
}

.fx.big {
  font-size: 13px;
  color: #ccc;
}

.weight {
  width: 55px;
  height: 16px;
  border: solid #e9e6ea;
  border-width: 5px 3px;
  background: #000;
}

.corner {
  width: 55px;
  height: 16px;
  border: 2px solid #eceaed;
  background: linear-gradient(#444, #444) 0 0 / 100% 1px no-repeat, linear-gradient(#444, #444) 100% 0 / 2px 100% no-repeat, #e9e7ea;
}

.autofit {
  display: flex;
  align-items: center;
  gap: 5px;
}

.autofit i {
  width: 10px;
  height: 10px;
  border: 1px solid #999;
}

.work {
  flex: none;
  display: flex;
  height: 576px;
}

.toolbar {
  width: 33px;
  border-right: 2px solid #414141;
  display: flex;
  flex-direction: column;
  align-items: center;
}

.dock-head {
  flex: none;
  align-self: stretch;
  height: 10px;
  background: #424242;
  padding-left: 5px;
  font-size: 9px;
  line-height: 8px;
  font-weight: bold;
  color: #bbb;
}

.grip {
  flex: none;
  width: 15px;
  height: 3px;
  margin: 4px auto 5px;
  background: repeating-linear-gradient(90deg, #434343 0 1px, #535353 1px 2px);
}

.tool {
  flex: none;
  width: 22px;
  height: 19.58px;
  padding: 0;
  border: 0;
  background: none;
  display: grid;
  place-items: center;
  position: relative;
}

.tool svg {
  width: 14px;
  height: 14px;
}

.tool.active {
  background: #2f2f2f;
}

.more::after {
  content: "";
  position: absolute;
  right: 1px;
  bottom: 1px;
  border-left: 2px solid transparent;
  border-bottom: 2px solid #ddd;
}

.mini {
  display: flex;
  align-items: center;
  gap: 5px;
  height: 18px;
}

.mini svg {
  width: 10px;
  height: 10px;
}

.fillstroke {
  width: 24px;
  height: 24px;
  stroke: none;
}

.mini.second {
  height: 21px;
  color: #999;
  font-size: 10px;
}

.mini.second i {
  width: 9px;
  height: 9px;
  border: 1px solid #333;
  background: #777;
}

.tool.slot {
  height: 17px;
  margin-bottom: 5.500px;
}

.document {
  width: 1130px;
  display: flex;
  flex-direction: column;
}

.tabs {
  flex: none;
  height: 24px;
  background: #424242;
  border-bottom: 1px solid #3b3b3b;
  display: flex;
}

.tab {
  width: 187px;
  padding-left: 11px;
  background: #505050;
  color: #f0f0f0;
  font-size: 9.100px;
  font-weight: bold;
  letter-spacing: -0.13px;
  line-height: 24px;
  white-space: nowrap;
}

.tab b {
  font-size: 12px;
}

.canvas {
  flex: none;
  height: 539px;
  display: flex;
  background: #5d5d5d;
}

.page {
  width: 1119px;
  height: 539px;
  stroke: none;
}

.margin {
  stroke: #b964bd;
  stroke-width: 1;
}

.outer {
  stroke: #3d5a7e;
  stroke-width: 1.800;
}

.thin {
  stroke: #85a9df;
  stroke-width: 0.800;
}

.dashed {
  stroke: #5590cd;
  stroke-width: 1.800;
  stroke-dasharray: 6 3;
}

.sign,
.listbox {
  stroke: #9a908f;
  stroke-width: 1;
}

.listbox rect {
  fill: #fff;
}

.handle {
  fill: #fff;
  stroke: #6d9ad8;
  stroke-width: 1;
}

.vscroll {
  width: 11px;
  background: #4c4c4c;
  display: flex;
  flex-direction: column;
  align-items: center;
}

.vscroll svg {
  width: 7px;
  height: 7px;
  margin-top: 2px;
  color: #888;
}

.vscroll i {
  width: 10px;
  height: 45px;
  margin: 338px 0 133px;
  border-radius: 5px;
  background: #707070;
}

.status {
  flex: none;
  height: 13px;
  padding-top: 1px;
  display: flex;
  align-items: center;
  background: #4b4b4b;
  border-bottom: 1px solid #333;
  white-space: nowrap;
  line-height: 12px;
}

.status svg {
  width: 9px;
  height: 9px;
}

.zoomlevel {
  width: 34px;
  margin-left: 10px;
}

.s-first {
  margin-left: 8px;
}

.s-prev {
  margin-left: 8px;
}

.pagebox {
  display: flex;
  align-items: center;
  justify-content: space-between;
  width: 70px;
  height: 12px;
  margin-left: 7px;
  padding: 0 1px 0 2px;
  border: 1px solid #5e5e5e;
  background: #434343;
}

.s-next {
  margin-left: 9px;
}

.s-last {
  margin-left: 8px;
}

.status .s-flight {
  width: 11px;
  height: 10px;
  margin-left: 13px;
}

.profile {
  width: 80px;
  margin-left: 13px;
}

.ok {
  width: 9px;
  height: 9px;
  margin: 0 4px 0 12px;
  border-radius: 50%;
  background: #26a324;
}

.errors {
  width: 50px;
}

.hscroll {
  display: flex;
  align-items: center;
  width: 686px;
  height: 12px;
  margin-left: 4px;
}

.hscroll i {
  width: 300px;
  height: 10px;
  margin: 0 auto 0 167px;
  border-radius: 5px;
  background: #6d6d6d;
}

.status .s-spread {
  width: 13px;
  height: 11px;
  margin-left: 6px;
}

.dock {
  width: 31px;
  border-left: 2px solid #414141;
}

.dock.wide {
  width: 34px;
}

.dock .dock-head {
  padding: 0 4px 0 0;
  text-align: right;
}

.dock-group {
  border-bottom: 1px solid #414141;
  padding-bottom: 0.500px;
}

.dock-group .grip {
  margin: 3px auto;
}

.dock-group:nth-child(2) {
  padding-bottom: 1.500px;
}

.dock-group:nth-child(2) .grip {
  margin-bottom: 2.500px;
}

.dock-item {
  height: 22.300px;
  display: grid;
  place-items: center;
}

.dock-item svg {
  width: 15px;
  height: 15px;
  color: #cdcdcd;
}

.taskbar {
  position: relative;
  flex: none;
  height: 27px;
  display: flex;
  align-items: flex-start;
  overflow: hidden;
  background: linear-gradient(90deg, #d9e4cf 0, #cee8df 8%, #d6dcdc 16%, #d6e2d7 26%, #ecdfdc 34%, #f8e6e2 40%, #fae9d3 54%, #d5cfc9 72%, #d2cfc8 100%);
}

.taskbar::after {
  content: "";
  position: absolute;
  left: 885px;
  top: 0;
  width: 333px;
  height: 9px;
  background: #fcfafa;
  border-radius: 0 0 4px 0;
}

.win {
  width: 19px;
  height: 19px;
  margin: 10px 0 0 321px;
  fill: #1aa0e8;
  stroke: none;
}

.searchbox {
  display: flex;
  align-items: center;
  width: 174px;
  height: 25px;
  margin: 7px 0 0 11px;
  padding-left: 9px;
  border-radius: 12px;
  background: #fcf8fb;
  color: #666;
  font-size: 10.700px;
}

.searchbox svg {
  color: #222;
}

.searchbox span {
  margin-left: 8px;
}

.searchbox .art {
  width: 34px;
  height: 18px;
  margin: 3px 4px 0 auto;
  stroke: none;
}

.taskview,
.copilot,
.folder,
.edge,
.camtasia {
  stroke: none;
  width: 20px;
  height: 20px;
  margin-top: 10px;
}

.taskview {
  margin-left: 11px;
}

.copilot {
  margin-left: 15px;
}

.folder {
  margin-left: 15px;
}

.edge {
  margin-left: 16px;
}

.camtasia {
  margin-left: 227px;
}

.tray {
  display: flex;
  margin: 13px 0 0 95px;
  gap: 13px;
}

.tray svg {
  width: 13px;
  height: 13px;
  color: #2c2c2c;
}

.tray svg:first-child {
  width: 10px;
  height: 13px;
}

.tray svg:nth-child(2) {
  margin-left: 1px;
}

.tray svg:nth-child(n + 5) {
  margin-left: -6px;
}

.tray .mic {
  color: #2b63b5;
}

.clock {
  display: flex;
  flex-direction: column;
  align-items: flex-end;
  width: 61px;
  margin-top: 6px;
  font-size: 9.800px;
  line-height: 13px;
  color: #333;
}

.bell {
  width: 13px;
  height: 13px;
  margin: 13px 0 0 6px;
  color: #333;
}

/* floating window */
.panel {
  position: absolute;
  left: 665px;
  top: 227px;
  width: 220px;
  height: 460px;
  border: 1px solid #3b3b3b;
  border-radius: 4px 4px 0 0;
  background: #535353;
  box-shadow: 0 0 3px rgba(0, 0, 0, 0.3);
  color: #e8e8e8;
  font-size: 8.200px;
  letter-spacing: -0.3px;
  overflow: hidden;
}

.panel-bar {
  height: 10px;
  padding-right: 4px;
  display: flex;
  justify-content: flex-end;
  gap: 8px;
  background: #444;
  font-size: 9px;
  line-height: 9px;
}

.panel-bar b {
  font-size: 12px;
}

.panel-tabs {
  height: 21px;
  display: flex;
  align-items: center;
  justify-content: space-between;
  background: #434343;
  padding-right: 5px;
}

.panel-tabs svg {
  width: 9px;
  height: 9px;
}

.panel-tab {
  width: 103px;
  height: 21px;
  background: #535353;
  font-size: 9px;
  font-weight: bold;
  letter-spacing: -0.13px;
  line-height: 21px;
  color: #f0f0f0;
  white-space: nowrap;
}

.panel-tab i {
  display: inline-block;
  width: 9px;
  margin-left: 5px;
  font-style: normal;
  font-weight: normal;
  font-size: 7px;
}

.panel-body {
  padding: 4px 5px 0 4px;
}

.prop {
  display: flex;
  align-items: center;
  height: 20.900px;
}

.prop label {
  width: 45px;
  text-align: right;
}

.input {
  position: relative;
  display: flex;
  justify-content: space-between;
  height: 17px;
  padding-left: 2px;
  border: 1px solid #626262;
  background: #454545;
  line-height: 15px;
}

.prop .input {
  width: 159px;
  margin-left: 5px;
}

.input span {
  width: 14px;
  border-left: 1px solid #626262;
  display: grid;
  place-items: center;
}

.input svg {
  width: 9px;
  height: 9px;
}

.actions svg {
  width: 9px;
  height: 9px;
  margin-left: 9px;
}

.actions .off {
  margin-left: 15px;
  color: #888;
}

.actionlist {
  height: 65px;
  margin-top: 3px;
  padding: 3px 14px 0 0;
  border: 1px solid #5a5a5a;
  text-align: center;
  line-height: 12px;
}

.check {
  display: flex;
  align-items: center;
  height: 17px;
}

.check i {
  position: relative;
  width: 10px;
  height: 10px;
  margin: 0 4px 0 0.500px;
  border: 1px solid #9a9a9a;
}

.check i.ticked {
  background: #d8d8d8;
}

.check i.ticked::after {
  content: "";
  position: absolute;
  left: 3px;
  top: 0;
  width: 2px;
  height: 5px;
  border: solid #333;
  border-width: 0 1.500px 1.500px 0;
  transform: rotate(40deg);
}

.actionlist + .check {
  margin-top: 4px;
}

.section {
  display: flex;
  align-items: center;
  gap: 3px;
  height: 16px;
  margin: 10px 0 0 3px;
}

.section svg {
  width: 8px;
  height: 8px;
  margin-bottom: 3px;
}

.desc {
  margin-top: 6px;
  line-height: 12px;
}

.input.full {
  width: 208px;
  margin-top: 3px;
}

.checks {
  display: grid;
  grid-template-columns: 96px 96px;
  margin-top: 4px;
}

.items {
  display: flex;
  align-items: center;
}

.items span {
  width: 41px;
  white-space: nowrap;
}

.items .input {
  width: 115px;
}

.items svg {
  width: 9px;
  height: 9px;
  margin-left: 8px;
  color: #8a8a8a;
}

.itemlist {
  width: 203px;
  height: 110px;
  margin-top: 3px;
  border: 1px solid #585858;
}

.cursor {
  position: absolute;
  left: 735px;
  top: 265px;
  width: 24px;
  height: 44px;
  overflow: visible;
}

.halo {
  stroke: #989898;
  stroke-width: 7;
}

.beam {
  stroke: #050505;
  stroke-width: 3.600;
}
</style>
